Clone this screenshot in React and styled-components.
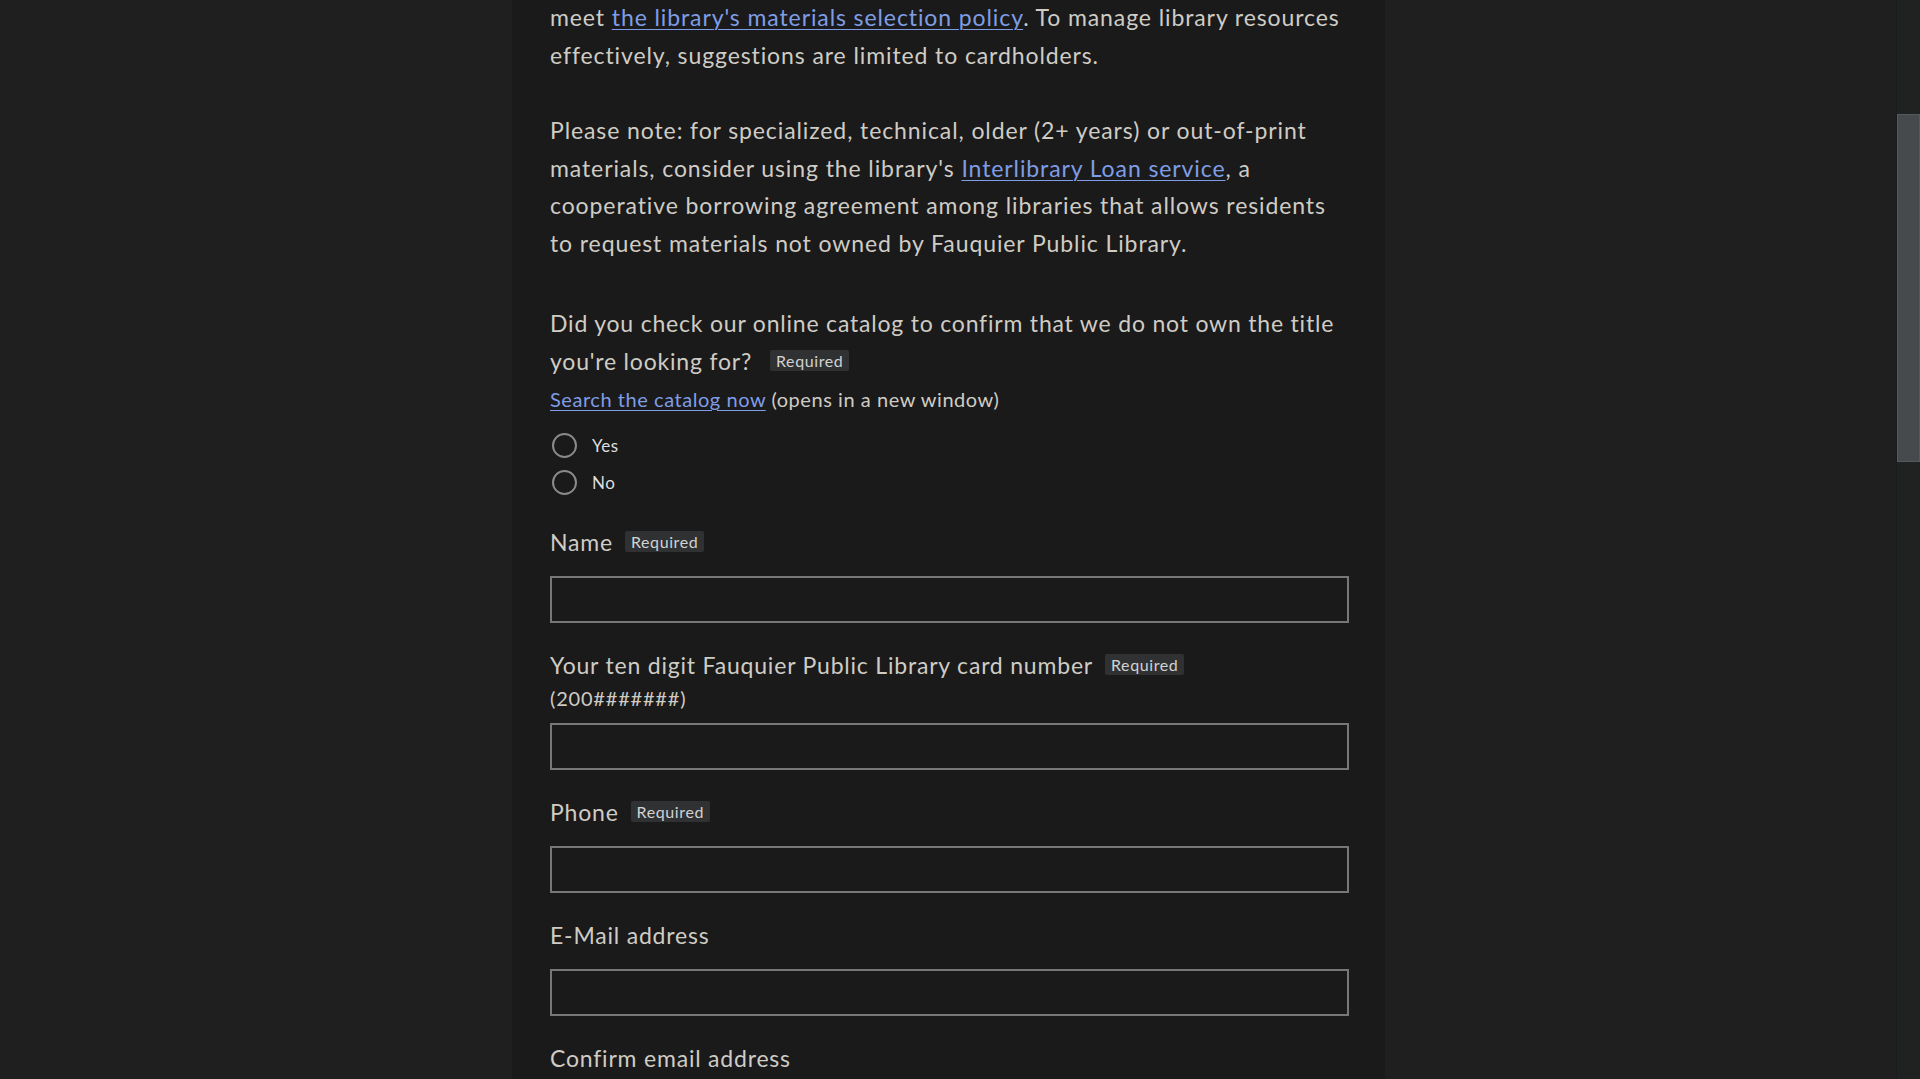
import styled, { createGlobalStyle } from "styled-components";

const GlobalStyle = createGlobalStyle`
  html, body {
    margin: 0;
    padding: 0;
    height: 100%;
    overflow: hidden;
    background: #1f1f1f;
  }
  #root {
    height: 100%;
  }
`;

const SC = {
  Screen: styled.div`
    display: flex;
    height: 1079px;
    width: 1920px;
    background: #1f1f1f;
    font-family: "Lato", "Open Sans", sans-serif;
    color: #cfccc5;
  `,
  Page: styled.div`
    flex: 1;
    display: flex;
    justify-content: flex-start;
    overflow: hidden;
  `,
  Panel: styled.main`
    margin-left: 512px;
    width: 873px;
    background: #1a1a1a;
    padding: 0 36px 0 38px;
    box-sizing: border-box;
  `,
  Paragraph: styled.p`
    margin: ${(p) => p.$top || 0}px 0 0 0;
    font-size: 23px;
    letter-spacing: 0.9px;
    line-height: 37.5px;
  `,
  Link: styled.a`
    color: #7f9de6;
    text-decoration: underline;
    text-underline-offset: 3px;
    text-decoration-thickness: 1px;
  `,
  Question: styled.fieldset`
    border: 0;
    margin: 43px 0 0 0;
    padding: 0;
  `,
  Legend: styled.legend`
    padding: 0;
    font-size: 23px;
    letter-spacing: 0.8px;
    line-height: 37.5px;
  `,
  Badge: styled.span`
    display: inline-block;
    margin-left: ${(p) => p.$gap || 14}px;
    padding: 0 6px;
    height: 21px;
    line-height: 21px;
    font-size: 16px;
    letter-spacing: 0.6px;
    vertical-align: 3px;
    background: #2f3133;
    color: #d2d2d2;
    border-radius: 2px;
  `,
  Help: styled.div`
    margin-top: 4px;
    font-size: 20px;
    letter-spacing: 0.55px;
    line-height: 30px;
  `,
  RadioList: styled.div`
    display: flex;
    flex-direction: column;
    gap: 7px;
    margin-top: 16px;
  `,
  RadioRow: styled.label`
    display: flex;
    align-items: center;
    gap: 15px;
    height: 30px;
    padding-left: 2px;
    font-size: 17px;
    letter-spacing: 0.5px;
    color: #dedede;
  `,
  RadioCircle: styled.span`
    width: 21px;
    height: 21px;
    border: 2px solid #8a8a8a;
    border-radius: 50%;
  `,
  Form: styled.div`
    display: flex;
    flex-direction: column;
    gap: 24px;
    margin-top: 27px;
  `,
  Field: styled.div`
    display: flex;
    flex-direction: column;
  `,
  Label: styled.label`
    font-size: 23px;
    letter-spacing: 0.8px;
    line-height: 37px;
    margin-bottom: ${(p) => (p.$hint ? 0 : 15)}px;
  `,
  Hint: styled.div`
    font-size: 20px;
    letter-spacing: 0.8px;
    line-height: 28px;
    margin-bottom: 11px;
  `,
  Input: styled.input`
    width: 799px;
    height: 47px;
    box-sizing: border-box;
    background: #1a1a1a;
    border: 2px solid #777775;
    border-radius: 0;
    outline: none;
    color: #ddd;
    font-size: 20px;
    font-family: inherit;
  `,
  ScrollTrack: styled.div`
    width: 24px;
    background: #202222;
    border-left: 1px solid #1a1d1f;
    box-sizing: border-box;
  `,
  ScrollThumb: styled.div`
    margin-top: 114px;
    height: 348px;
    background: #464a4d;
    border: 1px solid #55595c;
    box-sizing: border-box;
  `,
};

function Field({ label, required, hint }) {
  return (
    <SC.Field>
      <SC.Label $hint={!!hint}>
        {label}
        {required && <SC.Badge $gap={12}>Required</SC.Badge>}
      </SC.Label>
      {hint && <SC.Hint>{hint}</SC.Hint>}
      <SC.Input type="text" />
    </SC.Field>
  );
}

export default function App() {
  return (
    <>
      <GlobalStyle />
      <SC.Screen>
        <SC.Page>
          <SC.Panel>
            <SC.Paragraph $top={-1}>
              meet <SC.Link href="#">the library's materials selection policy</SC.Link>. To
              manage library resources effectively, suggestions are limited to cardholders.
            </SC.Paragraph>
            <SC.Paragraph $top={38}>
              Please note: for specialized, technical, older (2+ years) or out-of-print
              materials, consider using the library's{" "}
              <SC.Link href="#">Interlibrary Loan service</SC.Link>, a cooperative borrowing
              agreement among libraries that allows residents to request materials not owned
              by Fauquier Public Library.
            </SC.Paragraph>

            <SC.Question>
              <SC.Legend>
                Did you check our online catalog to confirm that we do not own the title
                you're looking for?<SC.Badge $gap={18}>Required</SC.Badge>
              </SC.Legend>
              <SC.Help>
                <SC.Link href="#">Search the catalog now</SC.Link> (opens in a new window)
              </SC.Help>
              <SC.RadioList>
                <SC.RadioRow>
                  <SC.RadioCircle />
                  Yes
                </SC.RadioRow>
                <SC.RadioRow>
                  <SC.RadioCircle />
                  No
                </SC.RadioRow>
              </SC.RadioList>
            </SC.Question>

            <SC.Form>
              <Field label="Name" required />
              <Field
                label="Your ten digit Fauquier Public Library card number"
                required
                hint="(200#######)"
              />
              <Field label="Phone" required />
              <Field label="E-Mail address" />
              <Field label="Confirm email address" />
            </SC.Form>
          </SC.Panel>
        </SC.Page>
        <SC.ScrollTrack>
          <SC.ScrollThumb />
        </SC.ScrollTrack>
      </SC.Screen>
    </>
  );
}
